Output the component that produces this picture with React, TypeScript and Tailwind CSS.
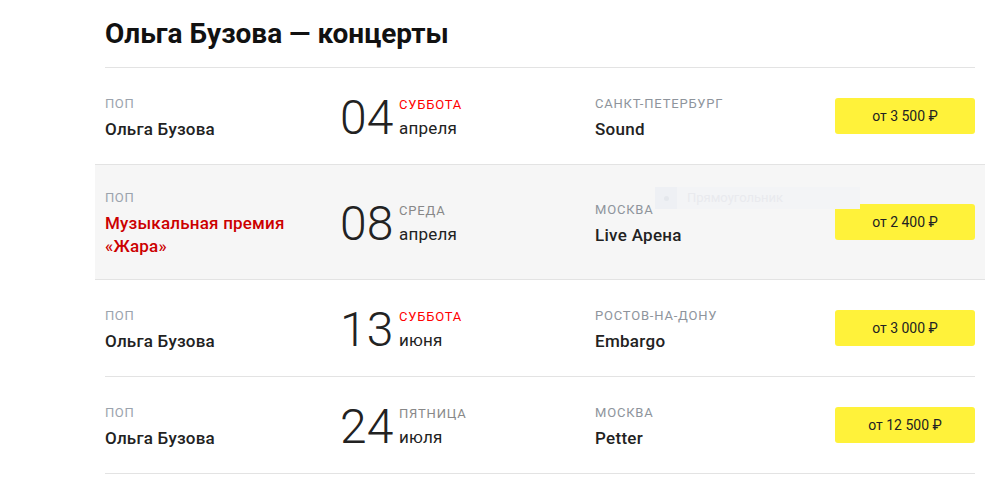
import React from "react";

type Concert = {
  genre: string;
  title: string;
  day: string;
  weekday: string;
  weekend: boolean;
  month: string;
  city: string;
  venue: string;
  price: string;
  active?: boolean;
};

const concerts: Concert[] = [
  {
    genre: "поп",
    title: "Ольга Бузова",
    day: "04",
    weekday: "суббота",
    weekend: true,
    month: "апреля",
    city: "Санкт-Петербург",
    venue: "Sound",
    price: "от 3 500 ₽",
  },
  {
    genre: "поп",
    title: "Музыкальная премия «Жара»",
    day: "08",
    weekday: "среда",
    weekend: false,
    month: "апреля",
    city: "Москва",
    venue: "Live Арена",
    price: "от 2 400 ₽",
    active: true,
  },
  {
    genre: "поп",
    title: "Ольга Бузова",
    day: "13",
    weekday: "суббота",
    weekend: true,
    month: "июня",
    city: "Ростов-на-Дону",
    venue: "Embargo",
    price: "от 3 000 ₽",
  },
  {
    genre: "поп",
    title: "Ольга Бузова",
    day: "24",
    weekday: "пятница",
    weekend: false,
    month: "июля",
    city: "Москва",
    venue: "Petter",
    price: "от 12 500 ₽",
  },
];

const ConcertRow: React.FC<{ concert: Concert }> = ({ concert }) => {
  return (
    <div
      className={
        concert.active
          ? "relative -mx-[10px] -mt-px flex min-h-[97px] items-center border-y border-[#e3e3e3] bg-[#f6f6f6] px-[10px] pt-[21px] pb-[21px]"
          : "relative flex min-h-[97px] items-center border-b border-[#e3e3e3] py-[20px]"
      }
    >
      {/* Genre + title */}
      <div className="mt-[3px] flex w-[235px] flex-col gap-[6px] pr-4">
        <span className="text-[13px] leading-[17px] uppercase tracking-[0.6px] text-[#9ba3ad]">
          {concert.genre}
        </span>
        <span
          className={
            concert.active
              ? "text-[17px] leading-[23px] font-medium tracking-[0.2px] text-[#cc0000]"
              : "text-[17px] leading-[23px] font-medium tracking-[0.2px] text-[#222]"
          }
        >
          {concert.title}
        </span>
      </div>

      {/* Date */}
      <div className="mt-[2px] flex w-[255px] items-end">
        <span className="w-[59px] text-[48px] leading-[40px] font-light text-[#222]">
          {concert.day}
        </span>
        <div className="flex flex-col gap-[5px]">
          <span
            className={
              concert.weekend
                ? "text-[13px] leading-[16px] uppercase tracking-[0.8px] text-[#ff0000]"
                : "text-[13px] leading-[16px] uppercase tracking-[0.8px] text-[#888]"
            }
          >
            {concert.weekday}
          </span>
          <span className="text-[17px] leading-[20px] tracking-[0.2px] text-[#222]">
            {concert.month}
          </span>
        </div>
      </div>

      {/* Place */}
      <div className="mt-[3px] flex flex-1 flex-col gap-[6px]">
        <span className="text-[13px] leading-[17px] uppercase tracking-[0.8px] text-[#8e949c]">
          {concert.city}
        </span>
        <span className="text-[17px] leading-[23px] font-medium tracking-[0.3px] text-[#222]">
          {concert.venue}
        </span>
      </div>

      <button className="h-[36px] w-[140px] rounded-[3px] bg-[#fff23a] text-[14px] text-[#222]">
        {concert.price}
      </button>

      {concert.active && (
        <div className="absolute left-[560px] top-[22px] flex h-[22px] w-[205px] items-center gap-[10px] bg-[#f3f4f6]">
          <div className="flex h-[22px] w-[22px] items-center justify-center bg-[#eef0f4]">
            <div className="h-[5px] w-[5px] rounded-full bg-[#e4e7ec]" />
          </div>
          <span className="text-[13px] text-[#e9eaee]">Прямоугольник</span>
        </div>
      )}
    </div>
  );
};

export default function App() {
  return (
    <div className="min-h-screen bg-white font-['Roboto','Liberation_Sans',sans-serif]">
      <div className="ml-[105px] w-[870px]">
        <h1 className="border-b border-[#e3e3e3] pt-[17px] pb-[17px] text-[28px] leading-[33px] font-bold text-[#111]">
          Ольга Бузова — концерты
        </h1>
        <div className="flex flex-col">
          {concerts.map((c, i) => (
            <ConcertRow key={i} concert={c} />
          ))}
        </div>
      </div>
    </div>
  );
}
